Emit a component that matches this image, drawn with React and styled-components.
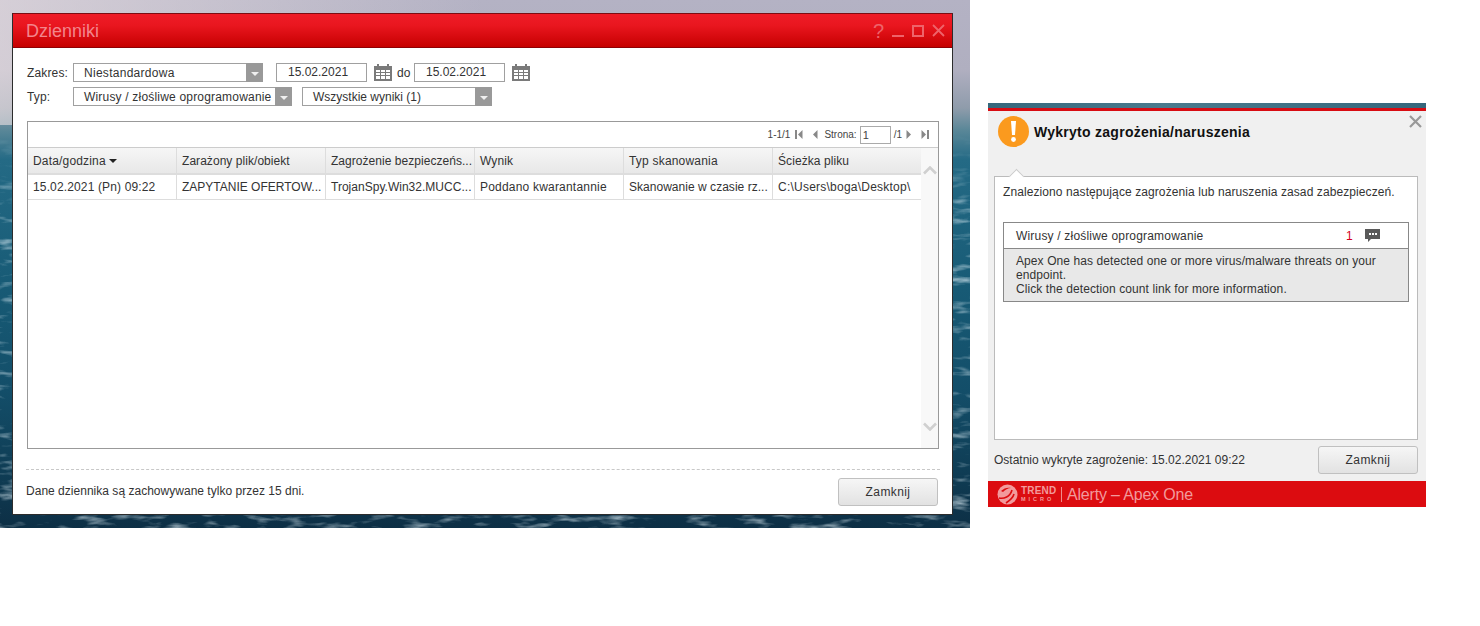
import React from 'react';
import styled, { createGlobalStyle } from 'styled-components';

const GlobalStyle = createGlobalStyle`
  html, body {
    margin: 0;
    padding: 0;
    background: #fff;
  }
  body {
    font-family: "Liberation Sans", Arial, sans-serif;
    font-size: 12px;
    color: #333;
  }
`;

const Page = styled.div`
  display: flex;
  align-items: flex-start;
  width: 1480px;
  height: 626px;
  overflow: hidden;
`;

const Desktop = styled.div`
  position: relative;
  box-sizing: border-box;
  width: 970px;
  height: 528px;
  padding: 13px 0 0 12px;
  overflow: hidden;
  background:
    linear-gradient(90deg, rgba(236, 226, 228, 0.6) 0, rgba(236, 226, 228, 0) 50%) 0 0 / 100% 125px no-repeat,
    linear-gradient(180deg, #b4b2c4 0, #b0afc0 70px, #8f9cab 108px, #5a8798 130px, #246a85 160px, #175a75 290px, #134e69 390px, #0f3d55 470px, #0d2f45 528px);
`;

const WaveLayer = styled.svg`
  position: absolute;
  left: 0;
  top: 0;
  width: 970px;
  height: 528px;
`;

const Window = styled.div`
  position: relative;
  box-sizing: border-box;
  display: flex;
  flex-direction: column;
  width: 941px;
  height: 502px;
  background: #fff;
  border: 1px solid #2c2c2c;
  border-top-color: #7c0d12;
`;

const TitleBar = styled.div`
  display: flex;
  align-items: center;
  justify-content: space-between;
  flex: none;
  height: 33px;
  padding: 0 7px 0 13px;
  background: linear-gradient(180deg, #ee1c27 0, #e9161f 35%, #c60000 100%);
  border-bottom: 1px solid #8f0005;
`;

const WindowTitle = styled.div`
  font-size: 18px;
  color: #f3858c;
  padding-top: 1px;
`;

const WindowControls = styled.div`
  display: flex;
  align-items: center;
  gap: 8px;
  color: #ee636a;
`;

const HelpMark = styled.span`
  font-size: 20px;
  line-height: 20px;
`;

const WindowBody = styled.div`
  display: flex;
  flex-direction: column;
  flex: 1;
  padding: 15px 13px 8px 14px;
`;

const FilterRow = styled.div`
  display: flex;
  align-items: center;
  height: 19px;
  margin-bottom: 5px;
`;

const FilterLabel = styled.label`
  width: 46px;
  color: #333;
  letter-spacing: 0.15px;
`;

const SelectBox = styled.div`
  box-sizing: border-box;
  display: flex;
  align-items: center;
  justify-content: space-between;
  height: 19px;
  width: ${props => props.width}px;
  margin-right: ${props => props.gap || 0}px;
  border: 1px solid #a0a0a0;
  background: #fff;
`;

const SelectText = styled.span`
  padding-left: 10px;
  white-space: nowrap;
  color: #333;
  letter-spacing: ${props => props.spacing || 0}px;
`;

const SelectArrow = styled.span`
  display: flex;
  align-items: center;
  justify-content: center;
  flex: none;
  width: 17px;
  height: 19px;
  margin-right: -1px;
  background: #999;

  &::after {
    content: '';
    margin-top: 2px;
    border-left: 4px solid transparent;
    border-right: 4px solid transparent;
    border-top: 4px solid #f0f0f0;
  }
`;

const DateBox = styled.div`
  box-sizing: border-box;
  width: 91px;
  height: 19px;
  padding-left: 11px;
  line-height: 17px;
  border: 1px solid #a0a0a0;
  color: #333;
`;

const CalendarButton = styled.span`
  display: flex;
  margin: 0 ${props => props.after || 0}px 0 7px;
`;

const ToLabel = styled.span`
  width: 17px;
  color: #333;
`;

const TableFrame = styled.div`
  box-sizing: border-box;
  display: flex;
  flex-direction: column;
  height: 328px;
  margin-top: 10px;
  border: 1px solid #999;
`;

const Pager = styled.div`
  box-sizing: border-box;
  display: flex;
  align-items: center;
  justify-content: flex-end;
  flex: none;
  height: 26px;
  padding-right: 9px;
  font-size: 10px;
  color: #444;
  border-bottom: 1px solid #ccc;
`;

const PagerText = styled.span`
  margin: 0 ${props => props.right || 0}px 0 ${props => props.left || 0}px;
`;

const PagerIcon = styled.svg`
  margin-left: ${props => props.left || 0}px;
  flex: none;
  transform: ${props => (props.flip ? 'scaleX(-1)' : 'none')};
`;

const PageInput = styled.span`
  box-sizing: border-box;
  width: 31px;
  height: 18px;
  margin-left: 3px;
  padding-left: 2px;
  line-height: 16px;
  font-size: 11px;
  border: 1px solid #aaa;
`;

const TableArea = styled.div`
  display: flex;
  flex: 1;
  min-height: 0;
`;

const TableMain = styled.div`
  flex: 1;
  min-width: 0;
`;

const TableRow = styled.div`
  box-sizing: border-box;
  display: grid;
  grid-template-columns: 149px 149px 149px 149px 149px 148px;
  height: ${props => props.height}px;
  background: ${props => (props.head ? 'linear-gradient(180deg, #f6f6f6 0, #e8e8e8 100%)' : '#fff')};
  border-bottom: ${props => (props.head ? 2 : 1)}px solid #ddd;
`;

const Cell = styled.div`
  display: flex;
  align-items: center;
  gap: 3px;
  padding-left: 5px;
  white-space: nowrap;
  overflow: hidden;
  color: #333;
  letter-spacing: ${props => props.spacing || 0}px;
  border-right: 1px solid #ddd;

  &:last-child {
    border-right: none;
  }
`;

const SortArrow = styled.span`
  margin-top: 1px;
  border-left: 4px solid transparent;
  border-right: 4px solid transparent;
  border-top: 4px solid #222;
`;

const ScrollTrack = styled.div`
  display: flex;
  flex-direction: column;
  align-items: center;
  justify-content: space-between;
  flex: none;
  width: 17px;
  padding: 18px 0 17px;
  background: #f8f8f8;
`;

const FooterRule = styled.div`
  margin: 20px -1px 0 -1px;
  border-top: 1px dashed #c8c8c8;
`;

const WindowFooter = styled.div`
  display: flex;
  align-items: center;
  justify-content: space-between;
  margin: 8px 0 0 -1px;
  padding-right: 1px;
`;

const FooterNote = styled.span`
  margin-bottom: 2px;
  letter-spacing: 0.02px;
`;

const CloseButton = styled.button`
  box-sizing: border-box;
  width: 100px;
  height: 28px;
  padding: 0;
  font: 12px "Liberation Sans", Arial, sans-serif;
  letter-spacing: 0.4px;
  color: #333;
  background: linear-gradient(180deg, #f6f6f6 0, #e2e2e2 100%);
  border: 1px solid #c0c0c0;
  border-radius: 3px;
`;

const Alert = styled.div`
  display: flex;
  flex-direction: column;
  width: 438px;
  height: 404px;
  margin: 103px 0 0 18px;
  background: #f0f0f0;
`;

const AlertStrip = styled.div`
  flex: none;
  height: 5px;
  background: linear-gradient(90deg, #35677c, #4a7b8e 40%, #35677c);
  border-bottom: 3px solid #d80c12;
`;

const AlertBody = styled.div`
  position: relative;
  display: flex;
  flex-direction: column;
  flex: 1;
  padding: 6px 8px 7px 6px;
`;

const AlertHead = styled.div`
  display: flex;
  align-items: center;
  gap: 5px;
  height: 29px;
  padding-left: 4px;
`;

const AlertTitle = styled.h1`
  margin: 0;
  font-size: 14px;
  font-weight: bold;
  letter-spacing: 0.27px;
  color: #111;
`;

const AlertClose = styled.svg`
  position: absolute;
  right: 4px;
  top: 4px;
`;

const MessageCard = styled.div`
  position: relative;
  box-sizing: border-box;
  height: 264px;
  margin-top: 30px;
  padding: 8px 8px 0 8px;
  background: #fff;
  border: 1px solid #bbb;

  &::before {
    content: '';
    position: absolute;
    left: 16px;
    top: -6px;
    width: 10px;
    height: 10px;
    background: #fff;
    border-left: 1px solid #ccc;
    border-top: 1px solid #ccc;
    transform: rotate(45deg);
  }
`;

const MessageText = styled.div`
  color: #333;
  line-height: 14px;
  letter-spacing: 0.09px;
`;

const ThreatTable = styled.div`
  margin-top: 23px;
  border: 1px solid #888;
`;

const ThreatRow = styled.div`
  display: flex;
  align-items: center;
  height: 25px;
  padding-left: 12px;
  border-bottom: 1px solid #888;
`;

const ThreatName = styled.span`
  width: 330px;
  color: #333;
  letter-spacing: 0.19px;
`;

const ThreatCount = styled.span`
  width: 19px;
  color: #d4001c;
`;

const ThreatDetails = styled.div`
  padding: 5px 12px 5px;
  line-height: 14px;
  letter-spacing: 0.09px;
  color: #333;
  background: #e8e8e8;
`;

const AlertFooter = styled.div`
  display: flex;
  align-items: center;
  justify-content: space-between;
  margin-top: 6px;
`;

const BrandBar = styled.div`
  display: flex;
  align-items: center;
  flex: none;
  height: 26px;
  padding-left: 9px;
  background: #dc0c10;
  color: #f29a9c;
`;

const BrandWords = styled.div`
  display: flex;
  flex-direction: column;
  width: 35px;
  margin-left: 3px;
  font-weight: bold;
  line-height: 1;
`;

const BrandTop = styled.span`
  font-size: 10px;
  letter-spacing: 0.2px;
`;

const BrandBottom = styled.span`
  font-size: 5.5px;
  letter-spacing: 3px;
  margin-top: 1px;
  white-space: nowrap;
`;

const BrandDivider = styled.span`
  width: 1px;
  height: 15px;
  margin: 0 5px;
  background: #f08a8c;
`;

const BrandName = styled.span`
  font-size: 16px;
  letter-spacing: -0.18px;
  padding-top: 2px;
`;

const columns = [
    { name: 'Data/godzina', spacing: 0.17 },
    { name: 'Zarażony plik/obiekt', spacing: 0.05 },
    { name: 'Zagrożenie bezpieczeńs...', spacing: 0.04 },
    { name: 'Wynik', spacing: 0.1 },
    { name: 'Typ skanowania', spacing: 0.2 },
    { name: 'Ścieżka pliku', spacing: 0.08 },
];

const row = [
    { value: '15.02.2021 (Pn) 09:22', spacing: 0.14 },
    { value: 'ZAPYTANIE OFERTOW...', spacing: 0 },
    { value: 'TrojanSpy.Win32.MUCC...', spacing: 0.02 },
    { value: 'Poddano kwarantannie', spacing: 0.2 },
    { value: 'Skanowanie w czasie rz...', spacing: 0.03 },
    { value: 'C:\\Users\\boga\\Desktop\\', spacing: 0.23 },
];

function Waves() {
    return (
        <WaveLayer viewBox="0 0 970 528">
            <defs>
                <filter id="sea" x="0" y="0" width="100%" height="100%">
                    <feTurbulence type="fractalNoise" baseFrequency="0.035 0.13" numOctaves="3" seed="7" />
                    <feColorMatrix values="0 0 0 0 0.72  0 0 0 0 0.84  0 0 0 0 0.9  2.6 0 0 0 -1.35" />
                </filter>
                <linearGradient id="seaFade" x1="0" y1="0" x2="0" y2="1">
                    <stop offset="0.24" stopColor="#000" />
                    <stop offset="0.42" stopColor="#fff" />
                    <stop offset="1" stopColor="#fff" />
                </linearGradient>
                <mask id="seaMask">
                    <rect width="970" height="528" fill="url(#seaFade)" />
                </mask>
            </defs>
            <rect width="970" height="528" filter="url(#sea)" mask="url(#seaMask)" opacity="0.7" />
        </WaveLayer>
    );
}

function Calendar() {
    return (
        <svg width="18" height="17" viewBox="0 0 18 17">
            <path fill="#7a7a7a" d="M0 2h3V0h2v2h8V0h2v2h3v15H0z" />
            <path fill="#fff" d="M2 6h4v2H2zM7 6h4v2H7zM12 6h4v2h-4zM2 9h4v2H2zM7 9h4v2H7zM12 9h4v2h-4zM2 12h4v3H2zM7 12h4v3H7zM12 12h4v3h-4z" />
        </svg>
    );
}

function PagerArrow({ flip, bar, left }) {
    return (
        <PagerIcon width="9" height="9" viewBox="0 0 9 9" left={left} flip={flip}>
            <path fill="#888" d="M7.5 0v9L3 4.5z" />
            {bar && <path fill="#888" d="M0 0h2v9H0z" />}
        </PagerIcon>
    );
}

function Chevron({ down }) {
    return (
        <svg width="14" height="9" viewBox="0 0 14 9">
            <path fill="none" stroke="#d0d0d0" strokeWidth="2.6" d={down ? 'M1 1.5l6 6 6-6' : 'M1 7.5l6-6 6 6'} />
        </svg>
    );
}

function TrendLogo() {
    return (
        <svg width="21" height="21" viewBox="0 0 21 21">
            <circle cx="10.5" cy="10.5" r="10" fill="#f29a9c" />
            <path fill="none" stroke="#dc0c10" strokeWidth="1.6" d="M2 14c5 1 11-1 13-8M9 19c3-2 7-5 8-9" />
            <path fill="#dc0c10" d="M4 7c3-3 7-4 10-3-3 0-6 2-8 4z" />
        </svg>
    );
}

export default function App() {
    return (
        <Page>
            <GlobalStyle />
            <Desktop>
                <Waves />
                <Window>
                    <TitleBar>
                        <WindowTitle>Dzienniki</WindowTitle>
                        <WindowControls>
                            <HelpMark>?</HelpMark>
                            <svg width="12" height="12" viewBox="0 0 12 12">
                                <path fill="currentColor" d="M0 10h12v2H0z" />
                            </svg>
                            <svg width="12" height="12" viewBox="0 0 12 12">
                                <path fill="none" stroke="currentColor" strokeWidth="2" d="M1 1h10v10H1z" />
                            </svg>
                            <svg width="13" height="13" viewBox="0 0 13 13">
                                <path fill="none" stroke="currentColor" strokeWidth="1.8" d="M1 1l11 11M12 1L1 12" />
                            </svg>
                        </WindowControls>
                    </TitleBar>
                    <WindowBody>
                        <FilterRow>
                            <FilterLabel>Zakres:</FilterLabel>
                            <SelectBox width={190} gap={13}>
                                <SelectText spacing={0.28}>Niestandardowa</SelectText>
                                <SelectArrow />
                            </SelectBox>
                            <DateBox>15.02.2021</DateBox>
                            <CalendarButton after={5}><Calendar /></CalendarButton>
                            <ToLabel>do</ToLabel>
                            <DateBox>15.02.2021</DateBox>
                            <CalendarButton><Calendar /></CalendarButton>
                        </FilterRow>
                        <FilterRow>
                            <FilterLabel>Typ:</FilterLabel>
                            <SelectBox width={219} gap={10}>
                                <SelectText spacing={0.19}>Wirusy / złośliwe oprogramowanie</SelectText>
                                <SelectArrow />
                            </SelectBox>
                            <SelectBox width={190}>
                                <SelectText>Wszystkie wyniki (1)</SelectText>
                                <SelectArrow />
                            </SelectBox>
                        </FilterRow>
                        <TableFrame>
                            <Pager>
                                <PagerText>1-1/1</PagerText>
                                <PagerArrow bar left={5} />
                                <PagerArrow left={6} />
                                <PagerText left={5}>Strona:</PagerText>
                                <PageInput>1</PageInput>
                                <PagerText left={3}>/1</PagerText>
                                <PagerArrow flip left={3} />
                                <PagerArrow flip bar left={6} />
                            </Pager>
                            <TableArea>
                                <TableMain>
                                    <TableRow head height={27}>
                                        {columns.map((column, i) => (
                                            <Cell key={column.name} spacing={column.spacing}>
                                                {column.name}
                                                {i === 0 && <SortArrow />}
                                            </Cell>
                                        ))}
                                    </TableRow>
                                    <TableRow height={25}>
                                        {row.map(item => (
                                            <Cell key={item.value} spacing={item.spacing}>{item.value}</Cell>
                                        ))}
                                    </TableRow>
                                </TableMain>
                                <ScrollTrack>
                                    <Chevron />
                                    <Chevron down />
                                </ScrollTrack>
                            </TableArea>
                        </TableFrame>
                        <FooterRule />
                        <WindowFooter>
                            <FooterNote>Dane dziennika są zachowywane tylko przez 15 dni.</FooterNote>
                            <CloseButton>Zamknij</CloseButton>
                        </WindowFooter>
                    </WindowBody>
                </Window>
            </Desktop>
            <Alert>
                <AlertStrip />
                <AlertBody>
                    <AlertHead>
                        <svg width="31" height="31" viewBox="0 0 31 31">
                            <circle cx="15.5" cy="15.5" r="15.5" fill="#fb9a1e" />
                            <path fill="#fff" d="M13 5h5l-1 14h-3z" />
                            <circle cx="15.5" cy="23.5" r="2.4" fill="#fff" />
                        </svg>
                        <AlertTitle>Wykryto zagrożenia/naruszenia</AlertTitle>
                    </AlertHead>
                    <AlertClose width="13" height="13" viewBox="0 0 13 13">
                        <path fill="none" stroke="#999" strokeWidth="2.2" d="M1 1l11 11M12 1L1 12" />
                    </AlertClose>
                    <MessageCard>
                        <MessageText>Znaleziono następujące zagrożenia lub naruszenia zasad zabezpieczeń.</MessageText>
                        <ThreatTable>
                            <ThreatRow>
                                <ThreatName>Wirusy / złośliwe oprogramowanie</ThreatName>
                                <ThreatCount>1</ThreatCount>
                                <svg width="15" height="15" viewBox="0 0 15 15">
                                    <path fill="#5a5a5a" d="M0 1h15v10H6l-3 3v-3H0z" />
                                    <path fill="#fff" d="M4 5h2v2H4zM7 5h2v2H7zM10 5h2v2h-2z" />
                                </svg>
                            </ThreatRow>
                            <ThreatDetails>
                                Apex One has detected one or more virus/malware threats on your endpoint.
                                <br />
                                Click the detection count link for more information.
                            </ThreatDetails>
                        </ThreatTable>
                    </MessageCard>
                    <AlertFooter>
                        <span>Ostatnio wykryte zagrożenie: 15.02.2021 09:22</span>
                        <CloseButton>Zamknij</CloseButton>
                    </AlertFooter>
                </AlertBody>
                <BrandBar>
                    <TrendLogo />
                    <BrandWords>
                        <BrandTop>TREND</BrandTop>
                        <BrandBottom>MICRO</BrandBottom>
                    </BrandWords>
                    <BrandDivider />
                    <BrandName>Alerty – Apex One</BrandName>
                </BrandBar>
            </Alert>
        </Page>
    );
}
